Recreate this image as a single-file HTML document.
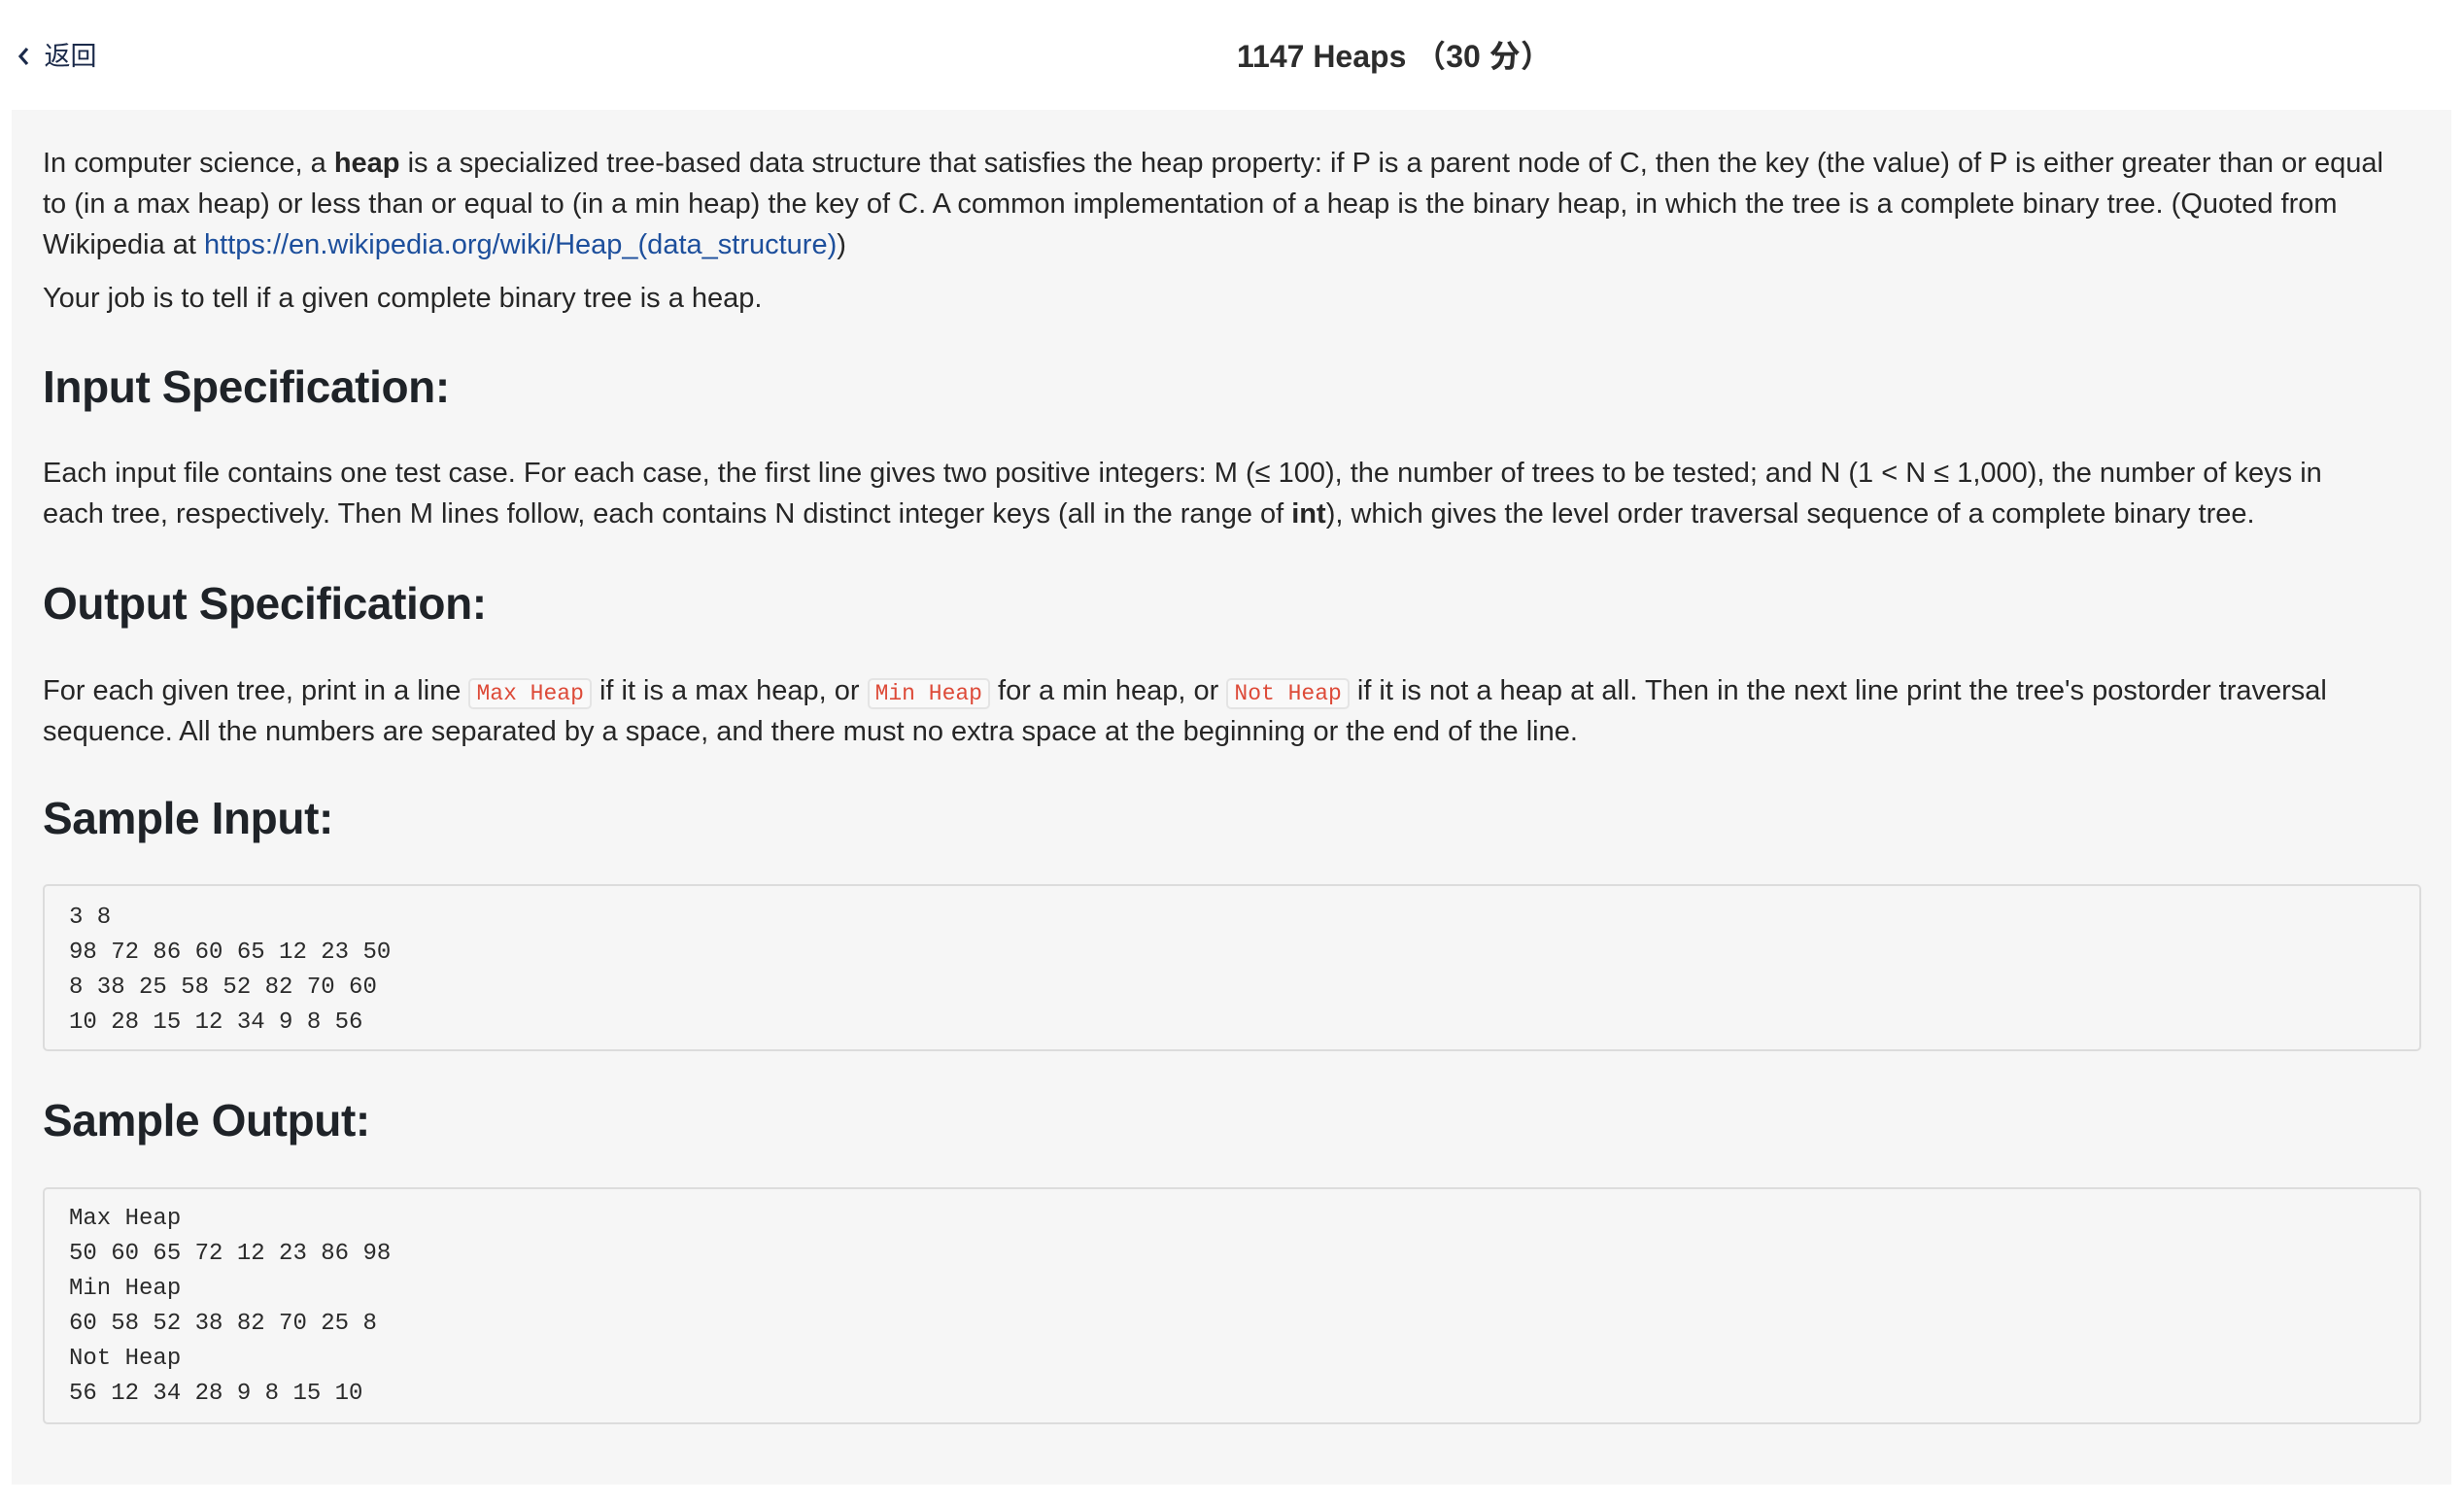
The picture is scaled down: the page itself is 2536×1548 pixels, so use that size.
<!DOCTYPE html>
<html><head><meta charset="utf-8">
<style>
html,body{margin:0;padding:0;width:2536px;height:1548px;background:#fff;overflow:hidden;}
body{font-family:"Liberation Sans","Noto Sans CJK SC",sans-serif;color:#262626;position:relative;}
.abs{position:absolute;white-space:nowrap;}
.panel{position:absolute;left:12px;top:113px;width:2511px;height:1415px;background:#f6f6f6;}
.p{font-size:29px;line-height:42px;left:44px;}
h2{margin:0;font-size:46px;font-weight:bold;letter-spacing:-0.4px;color:#1f2328;line-height:56px;left:44px;}
a{color:#1d4f9c;text-decoration:none;}
code.i{font-family:"Liberation Mono",monospace;font-size:23px;color:#dd4a38;background:#f9f9f9;border:2px solid #e4e4e4;border-radius:5px;padding:1px 6px;}
.box{position:absolute;left:44px;width:2444px;background:#f6f6f6;border:2px solid #dcdcdc;border-radius:5px;}
.box pre{margin:0;position:absolute;left:25px;font-family:"Liberation Mono",monospace;font-size:24px;line-height:36px;color:#2b2b2b;}
</style></head><body>
<div class="abs" style="left:18px;top:40px;font-size:27px;line-height:36px;color:#1b2a4a;">
<svg width="14" height="22" viewBox="0 0 14 22" style="vertical-align:-2px"><path d="M10 3 L3 11 L10 19" fill="none" stroke="#1b2a4a" stroke-width="3.2"/></svg>
<span style="margin-left:6px">返回</span></div>
<div class="abs" style="left:1273px;top:38px;font-size:32px;line-height:40px;font-weight:bold;color:#2d2d2d;">1147 Heaps （30 分）</div>

<div class="panel"></div>

<div class="abs p" style="top:147px">In computer science, a <b>heap</b> is a specialized tree-based data structure that satisfies the heap property: if P is a parent node of C, then the key (the value) of P is either greater than or equal</div>
<div class="abs p" style="top:189px">to (in a max heap) or less than or equal to (in a min heap) the key of C. A common implementation of a heap is the binary heap, in which the tree is a complete binary tree. (Quoted from</div>
<div class="abs p" style="top:231px">Wikipedia at <a>https://en.wikipedia.org/wiki/Heap_(data_structure)</a>)</div>
<div class="abs p" style="top:286px">Your job is to tell if a given complete binary tree is a heap.</div>

<h2 class="abs" style="top:370px">Input Specification:</h2>
<div class="abs p" style="top:466px">Each input file contains one test case. For each case, the first line gives two positive integers: M (≤ 100), the number of trees to be tested; and N (1 &lt; N ≤ 1,000), the number of keys in</div>
<div class="abs p" style="top:508px">each tree, respectively. Then M lines follow, each contains N distinct integer keys (all in the range of <b>int</b>), which gives the level order traversal sequence of a complete binary tree.</div>

<h2 class="abs" style="top:593px">Output Specification:</h2>
<div class="abs p" style="top:690px">For each given tree, print in a line <code class="i">Max Heap</code> if it is a max heap, or <code class="i">Min Heap</code> for a min heap, or <code class="i">Not Heap</code> if it is not a heap at all. Then in the next line print the tree's postorder traversal</div>
<div class="abs p" style="top:732px">sequence. All the numbers are separated by a space, and there must no extra space at the beginning or the end of the line.</div>

<h2 class="abs" style="top:814px">Sample Input:</h2>
<div class="box" style="top:910px;height:168px;"><pre style="top:15px">3 8
98 72 86 60 65 12 23 50
8 38 25 58 52 82 70 60
10 28 15 12 34 9 8 56</pre></div>

<h2 class="abs" style="top:1125px">Sample Output:</h2>
<div class="box" style="top:1222px;height:240px;"><pre style="top:13px">Max Heap
50 60 65 72 12 23 86 98
Min Heap
60 58 52 38 82 70 25 8
Not Heap
56 12 34 28 9 8 15 10</pre></div>
</body></html>
